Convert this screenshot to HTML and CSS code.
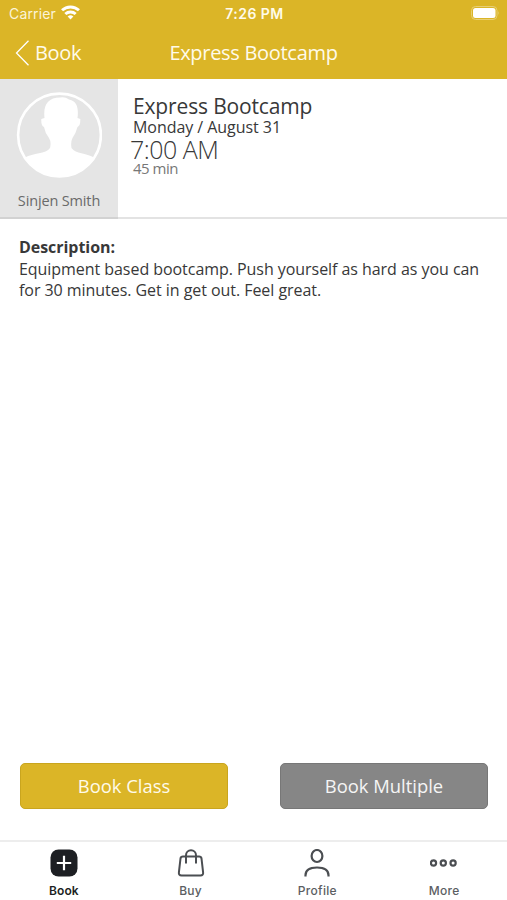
FILE: index.html
```html
<!DOCTYPE html>
<html lang="en">
<head>
<meta charset="utf-8">
<title>Express Bootcamp</title>
<link rel="stylesheet" href="styles.css">
</head>
<body>
<div class="app">
  <header class="header">
    <div class="status">
      <div class="carrier"><span>Carrier</span>
        <svg width="19" height="15" viewBox="0 0 18 14"><g fill="none" stroke="#fff" stroke-width="2.800"><path d="M1 4.900a11.600 11.600 0 0 1 16 0"/><path d="M4.100 8.400a7.200 7.200 0 0 1 9.800 0"/></g><path d="M9 13.600l-2.700-2.800a4 4 0 0 1 5.400 0z" fill="#fff"/></svg>
      </div>
      <div class="clock">7:26 PM</div>
      <svg class="battery" width="29" height="14" viewBox="0 0 29 14"><rect x=".5" y=".5" width="25.500" height="13" rx="4" fill="none" stroke="#e7cf74"/><rect x="2" y="2" width="22.500" height="10" rx="2.500" fill="#fff"/><path d="M27.300 5q1.600 2 0 4z" fill="#e7cf74"/></svg>
    </div>
    <nav class="navbar">
      <a class="back"><svg width="14" height="26" viewBox="0 0 14 26"><path d="M13.500 .8L1.500 13l12 12.200" fill="none" stroke="#fff" stroke-width="1.300"/></svg><span>Book</span></a>
      <h1 class="title">Express Bootcamp</h1>
    </nav>
  </header>
  <section class="summary">
    <div class="coach">
      <svg class="avatar" width="86" height="86" viewBox="0 0 86 86"><circle cx="43.500" cy="43" r="41.400" fill="#e5e5e5" stroke="#fff" stroke-width="2.600"/><path d="M9 65.500C17 61 30 62 34 56Q35.500 50 33 46Q29 41 28 35Q25 34 25.300 27L28.500 26C27 13 32 5.500 44 5.500Q49 4.500 53 7.500C62 9 62.500 18 61.500 26L64.300 27Q64.500 34 61.500 35Q60 41 56.500 46Q54.500 50 55.500 56C60 62 70 61 78 65.500A41.400 41.400 0 0 1 9 65.500z" fill="#fff"/></svg>
      <div class="coach-name">Sinjen Smith</div>
    </div>
    <div class="details">
      <div class="name">Express Bootcamp</div>
      <div class="date">Monday / August 31</div>
      <div class="time">7:00 AM</div>
      <div class="length">45 min</div>
    </div>
  </section>
  <main class="description">
    <h2>Description:</h2>
    <p>Equipment based bootcamp. Push yourself as hard as you can for 30 minutes. Get in get out. Feel great.</p>
  </main>
  <div class="actions">
    <button class="btn primary"><span>Book Class</span></button>
    <button class="btn secondary"><span>Book Multiple</span></button>
  </div>
  <footer class="tabs">
    <a class="tab active"><svg width="28" height="28" viewBox="0 0 28 28"><rect x=".5" y=".5" width="27" height="27" rx="8" fill="#1d1f23"/><path d="M14 6.800v14.400M6.800 14h14.400" stroke="#fff" stroke-width="2.200"/></svg><span>Book</span></a>
    <a class="tab"><svg width="28" height="28" viewBox="0 0 28 28"><g fill="none" stroke="#4b4e52" stroke-width="2" stroke-linejoin="round"><path d="M6 7.500h16q2.200 0 2.500 2l1.600 13.800q.4 3.200-2.600 3.200h-19q-3 0-2.600-3.200L3.500 9.500q.3-2 2.500-2z"/><path d="M9 14.500V6.200a5 5 0 0 1 10 0v8.300"/></g></svg><span>Buy</span></a>
    <a class="tab"><svg width="28" height="28" viewBox="0 0 28 28"><g fill="none" stroke="#4b4e52" stroke-width="2.200"><ellipse cx="14" cy="7" rx="5.400" ry="6"/><path d="M2.500 27.500v-1.300C2.500 21 7 18.500 14 18.500s11.500 2.500 11.500 7.700v1.300"/></g></svg><span>Profile</span></a>
    <a class="tab"><svg width="28" height="28" viewBox="0 0 28 28"><g fill="none" stroke="#4b4e52" stroke-width="2.200"><circle cx="3.500" cy="14" r="2.600"/><circle cx="13.300" cy="14" r="2.600"/><circle cx="23.100" cy="14" r="2.600"/></g></svg><span>More</span></a>
  </footer>
</div>
</body>
</html>
```
FILE: styles.css
```css
* { box-sizing: border-box; }
body { margin: 0; background: #fff; color: #383838; font-family: "Open Sans", "Noto Sans", sans-serif; }
h1, h2, p { margin: 0; font-weight: 400; }
svg { display: block; flex: none; }
.app { width: 507px; height: 900px; display: flex; flex-direction: column; overflow: hidden; }
.header { height: 79px; background: #dbb527; color: #fffbea; }
.status { height: 27px; padding: 0 7px 0 9px; display: grid; grid-template-columns: 1fr auto 1fr; align-items: center; font: 14px/20px Inter, sans-serif; }
.carrier { display: flex; gap: 5px; align-items: center; color: #fbf4d8; letter-spacing: .15px; }
.carrier svg { margin-top: -2px; }
.clock { font-weight: 600; letter-spacing: .45px; }
.battery { justify-self: end; margin-top: -1px; }
.navbar { height: 52px; padding: 0 15px; display: grid; grid-template-columns: 1fr auto 1fr; align-items: center; font-size: 20px; line-height: 28px; letter-spacing: -.3px; }
.back { display: flex; align-items: center; gap: 6px; }
.title { font-size: 20px; }
.summary { height: 140px; display: flex; border-bottom: 2px solid #e3e3e3; }
.coach { width: 118px; height: 140px; padding-top: 13px; background: #e5e5e5; border-bottom: 2px solid #d2d2d2; display: flex; flex-direction: column; align-items: center; }
.coach-name { margin-top: 14px; font-size: 14.500px; line-height: 18px; letter-spacing: -.15px; color: #6a6a6a; white-space: nowrap; }
.details { padding: 14px 0 0 15px; }
.name { font-size: 21px; line-height: 26px; letter-spacing: -.15px; }
.date { font-size: 16px; line-height: 16px; letter-spacing: -.05px; }
.time { margin-left: -3px; font-size: 25px; font-weight: 300; line-height: 28px; letter-spacing: -.5px; }
.length { font-size: 15px; line-height: 10px; letter-spacing: -.5px; color: #777; }
.description { flex: 1; padding: 18px 19px; font-size: 16px; line-height: 21.500px; letter-spacing: -.05px; }
.description h2 { font-size: 16px; font-weight: 700; line-height: 21.500px; }
.actions { display: flex; justify-content: space-between; padding: 0 19px 31px 20px; }
.btn { width: 208px; height: 46px; padding: 0; border-radius: 5px; color: #fffbea; font: 18.400px/24px "Open Sans", sans-serif; }
.primary { background: #dbb527; border: 1px solid #c9a51e; }
.secondary { background: #868686; border: 1px solid #777; color: #f5f5f5; }
.tabs { height: 60px; border-top: 2px solid #ededed; display: grid; grid-template-columns: repeat(4, 1fr); }
.tab { padding: 7px 0 0 1px; display: flex; flex-direction: column; align-items: center; gap: 6px; font: 500 12px/16px Inter, sans-serif; letter-spacing: .3px; color: #5b5e62; }
.active { color: #1d1f23; font-weight: 600; letter-spacing: .1px; }
```
